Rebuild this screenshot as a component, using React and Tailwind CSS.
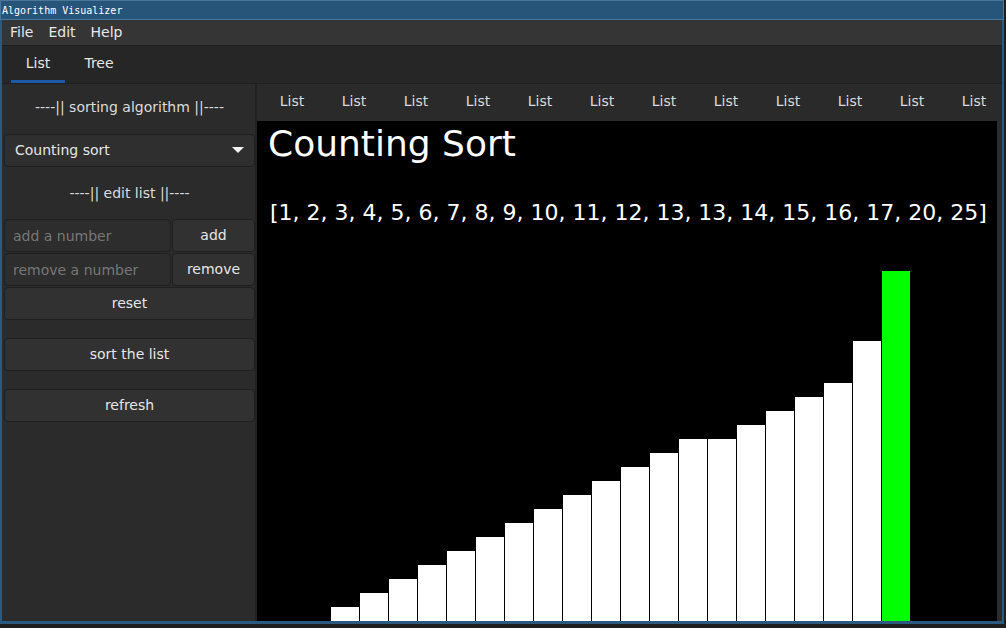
import { useState } from 'react'

const values = [1, 2, 3, 4, 5, 6, 7, 8, 9, 10, 11, 12, 13, 13, 14, 15, 16, 17, 20, 25]
const ui = { fontFamily: '"DejaVu Sans", "Liberation Sans", sans-serif' }

function Heading({ children, className }) {
  return (
    <div className={`flex items-center justify-center text-[14px] text-[#dcdcdc] ${className}`}>
      {children}
    </div>
  )
}

function Button({ children, className = '' }) {
  return (
    <button
      type="button"
      className={`flex h-[33px] items-center justify-center rounded-[4px] border border-[#1f1f1f] bg-[#313131] text-[14px] text-[#e6e6e6] ${className}`}
    >
      {children}
    </button>
  )
}

function NumberInput({ placeholder }) {
  return (
    <input
      placeholder={placeholder}
      className="h-[33px] w-[167px] rounded-[4px] border border-[#1f1f1f] bg-[#2d2d2d] px-[8px] text-[14px] text-[#e6e6e6] outline-none placeholder:text-[#777777]"
    />
  )
}

export default function App() {
  const [tab, setTab] = useState('List')

  return (
    <div className="h-[628px] w-[1006px] overflow-hidden bg-[#1e1e1e]" style={ui}>
      <div className="flex h-[20px] w-[1004px] items-center border border-[#4a7699] bg-[#27557a] px-[1px] text-[10px] text-white" style={{ fontFamily: '"DejaVu Sans Mono", "Liberation Mono", monospace' }}>
        Algorithm Visualizer
      </div>

      <div className="flex w-[1004px] flex-col border-x-2 border-b-[3px] border-[#2b5a80]">
        <div className="flex h-[25px] items-center gap-[15px] bg-[#353535] px-[8px] text-[14px] text-[#e8e8e8]">
          <span>File</span>
          <span>Edit</span>
          <span>Help</span>
        </div>

        <div className="flex h-[39px] border-t border-b border-[#1f1f1f] bg-[#262626] pl-[9px]">
          {['List', 'Tree'].map((t) => (
            <button
              key={t}
              type="button"
              onClick={() => setTab(t)}
              className={`flex h-full items-center justify-center border-b-[3px] pt-[1px] text-[14px] text-[#e6e6e6] ${t === 'List' ? 'w-[54px] border-[#1b5aa6]' : 'w-[68px] border-transparent'}`}
            >
              {t}
            </button>
          ))}
        </div>

        <div className="flex h-[537px]">
          <div className="flex w-[253px] shrink-0 flex-col bg-[#2b2b2b] pl-[2px]">
            <Heading className="h-[47px]">----|| sorting algorithm ||----</Heading>
            <div className="mt-[3px] flex h-[33px] items-center justify-between rounded-[4px] border border-[#1f1f1f] bg-[#2f2f2f] pl-[10px] pr-[10px] text-[14px] text-[#e6e6e6]">
              <span>Counting sort</span>
              <svg width="12" height="7" viewBox="0 0 12 7">
                <path d="M0 0 L12 0 L6 6 Z" fill="#f2f2f2" />
              </svg>
            </div>
            <Heading className="h-[52px]">----|| edit list ||----</Heading>
            <div className="flex gap-[1px]">
              <NumberInput placeholder="add a number" />
              <Button className="w-[83px]">add</Button>
            </div>
            <div className="mt-[1px] flex gap-[1px]">
              <NumberInput placeholder="remove a number" />
              <Button className="w-[83px]">remove</Button>
            </div>
            <Button className="mt-[1px] w-[251px]">reset</Button>
            <Button className="mt-[18px] w-[251px]">sort the list</Button>
            <Button className="mt-[18px] w-[251px]">refresh</Button>
          </div>

          <div className="w-[2px] shrink-0 bg-[#222222]" />

          <div className="flex min-w-0 flex-1 flex-col bg-[#2b2b2b]">
            <div className="flex h-[37px] shrink-0 items-center overflow-hidden bg-[#2a2a2a] pb-[2px] pl-[4px]">
              {Array.from({ length: 12 }).map((_, i) => (
                <span key={i} className="w-[62px] shrink-0 text-center text-[14px] text-[#dadada]">
                  List
                </span>
              ))}
            </div>
            <div className="flex h-[500px] w-[740px] flex-col bg-black pl-[11px]">
              <div className="mt-[5px] text-[36px] leading-[36px] text-white">Counting Sort</div>
              <div className="mt-[40px] pl-[2px] text-[22px] leading-[22px] text-white">
                [{values.join(', ')}]
              </div>
              <div className="flex flex-1 items-end gap-[1px] pl-[63px]">
                {values.map((v, i) => (
                  <div
                    key={i}
                    className={`w-[28px] ${i === values.length - 1 ? 'bg-[#00ff00]' : 'bg-white'}`}
                    style={{ height: v * 14 }}
                  />
                ))}
              </div>
            </div>
          </div>
        </div>
      </div>
    </div>
  )
}
